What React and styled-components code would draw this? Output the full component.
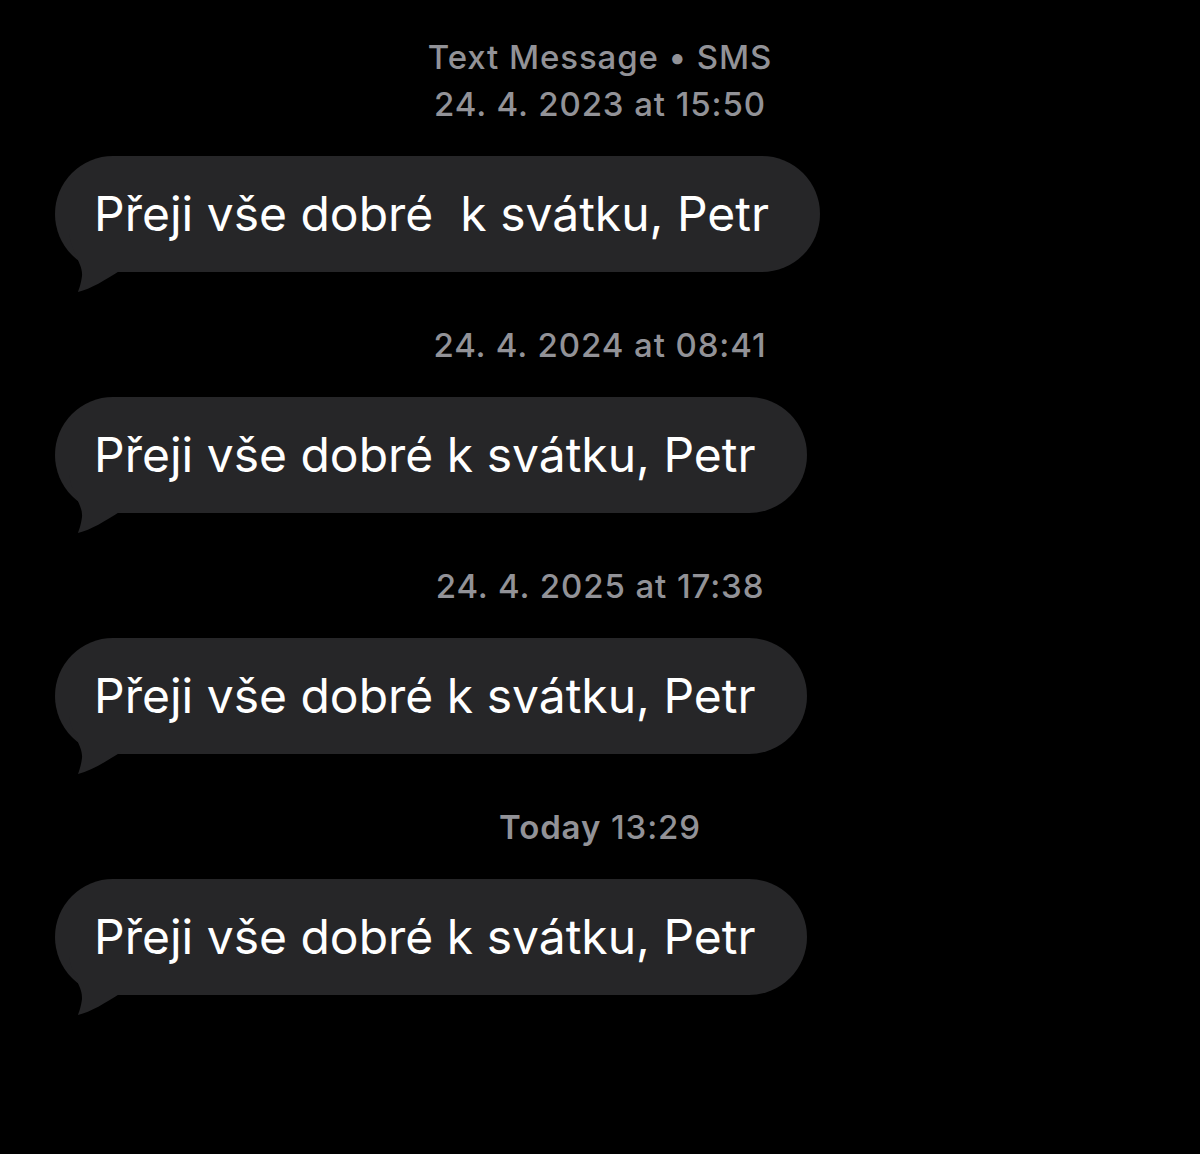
import React from 'react';
import styled, { createGlobalStyle } from 'styled-components';

const GlobalStyle = createGlobalStyle`
  html, body {
    margin: 0;
    padding: 0;
    background: #000000;
  }
  body {
    font-family: Inter, 'Noto Sans', sans-serif;
  }
`

const Thread = styled.div`
  width: 1200px;
  min-height: 1154px;
  padding-top: 34px;
  box-sizing: border-box;
  display: flex;
  flex-direction: column;
  background: #000000;
`

const Stamp = styled.div`
  text-align: center;
  font-size: 33px;
  letter-spacing: 0.9px;
  line-height: 47px;
  font-weight: 500;
  color: #929297;
  margin-top: ${props => props.first ? '0' : '50px'};
`

const Bold = styled.span`
  font-weight: 600;
`

const BubbleRow = styled.div`
  display: flex;
  margin-top: 28px;
  padding-left: 55px;
`

const Bubble = styled.div`
  position: relative;
  height: 116px;
  padding: 0 51px 0 39px;
  border-radius: 58px;
  background: #262628;
  color: #ffffff;
  font-size: 48px;
  line-height: 116px;
  white-space: pre;
`

const Tail = styled.svg`
  position: absolute;
  left: 0;
  bottom: -20px;
  width: 70px;
  height: 60px;
`

const MessageBubble = ({ text }) => (
  <BubbleRow>
    <Bubble>
      {text}
      <Tail viewBox="0 76 70 60">
        <path
          d="M 14 78 C 18 100 28 108 27 120 C 26 128 24 133 23 136 C 36 133 50 124 66 114 L 66 78 Z"
          fill="#262628"
        />
      </Tail>
    </Bubble>
  </BubbleRow>
)

const messages = [
  { stamp: <>24. 4. 2023 at 15:50</>, text: 'Přeji vše dobré  k svátku, Petr' },
  { stamp: <>24. 4. 2024 at 08:41</>, text: 'Přeji vše dobré k svátku, Petr' },
  { stamp: <>24. 4. 2025 at 17:38</>, text: 'Přeji vše dobré k svátku, Petr' },
  { stamp: <><Bold>Today</Bold> 13:29</>, text: 'Přeji vše dobré k svátku, Petr' },
]

const App = () => (
  <Thread>
    <GlobalStyle />
    <Stamp first>Text Message • SMS</Stamp>
    {messages.map((m, i) => (
      <React.Fragment key={i}>
        <Stamp first={i === 0}>{m.stamp}</Stamp>
        <MessageBubble text={m.text} />
      </React.Fragment>
    ))}
  </Thread>
)

export default App;
